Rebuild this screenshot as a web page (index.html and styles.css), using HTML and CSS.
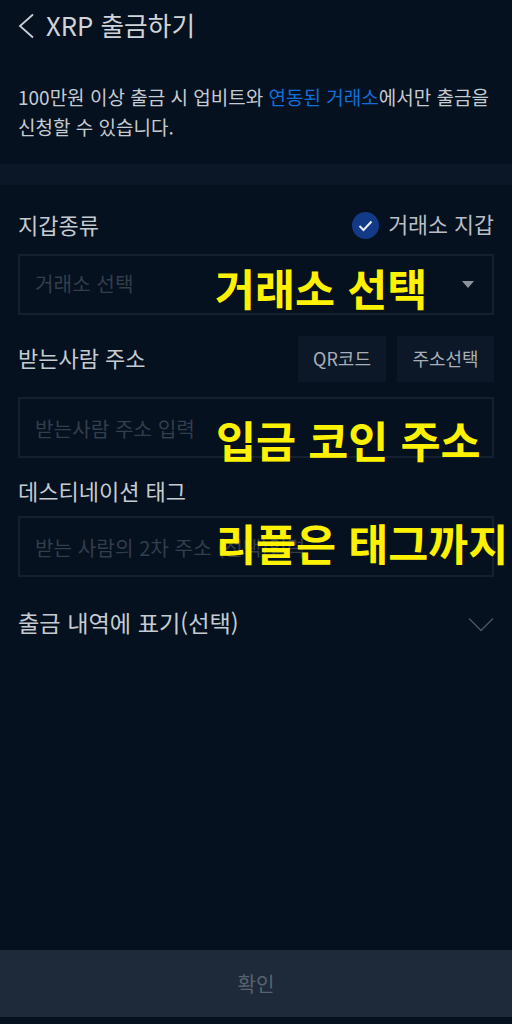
FILE: index.html
```html
<!DOCTYPE html>
<html lang="ko">
<head>
<meta charset="utf-8">
<title>XRP 출금하기</title>
<link rel="stylesheet" href="styles.css">
</head>
<body>
<div class="page">
  <header class="header">
    <svg class="back" width="18" height="26" viewBox="0 0 18 26"><path d="M16 1.500 3 13l13 11.500" fill="none" stroke="#c9ced6" stroke-width="1.800"/></svg>
    <h1 class="title">XRP 출금하기</h1>
  </header>
  <p class="notice">100만원 이상 출금 시 업비트와 <span class="link">연동된 거래소</span>에서만 출금을<br>신청할 수 있습니다.</p>
  <div class="band"></div>
  <main class="form">
    <div class="row wallet-row">
      <span class="label">지갑종류</span>
      <span class="check">
        <svg width="27" height="27" viewBox="0 0 27 27"><circle cx="13.500" cy="13.500" r="13.500" fill="#123a86"/><path d="M7.500 14l4 4 8-8.500" fill="none" stroke="#e8edf5" stroke-width="2"/></svg>
        <span class="check-text">거래소 지갑</span>
      </span>
    </div>
    <div class="field select"><span class="placeholder">거래소 선택</span><i class="caret"></i></div>
    <div class="row addr-row">
      <span class="label">받는사람 주소</span>
      <span class="btns"><span class="btn qr">QR코드</span><span class="btn pick">주소선택</span></span>
    </div>
    <div class="field"><span class="placeholder">받는사람 주소 입력</span></div>
    <div class="label tag-label">데스티네이션 태그</div>
    <div class="field"><span class="placeholder">받는 사람의 2차 주소 (선택)입력</span></div>
    <div class="row memo-row">
      <span class="label memo">출금 내역에 표기(선택)</span>
      <svg width="26" height="15" viewBox="0 0 26 15"><path d="M1 1.500 13 13.500 25 1.500" fill="none" stroke="#4a5563" stroke-width="1.500"/></svg>
    </div>
  </main>
  <div class="confirm">확인</div>
  <div class="note n1">거래소 선택</div>
  <div class="note n2">입금 코인 주소</div>
  <div class="note n3">리플은 태그까지</div>
</div>
</body>
</html>
```
FILE: styles.css
```css
* { box-sizing: border-box; }
html, body { margin: 0; padding: 0; }
body { background: #05111f; font-family: "Noto Sans CJK KR", "Noto Sans", sans-serif; color: #c4c9d0; }
.page { position: relative; width: 512px; height: 1024px; overflow: hidden; }
.header { display: flex; align-items: center; height: 52px; padding-left: 17px; }
.back { flex: none; }
.title { margin: 0 0 0 11px; padding-bottom: 2px; font-size: 25.700px; font-weight: 400; line-height: 50px; color: #d0d4da; }
.notice { margin: 30px 18px 0; font-size: 19px; line-height: 30px; color: #c6cbd2; white-space: nowrap; height: 82px; }
.link { color: #0f6fdc; }
.band { height: 21px; background: #0b1626; }
.form { padding: 0 18px; }
.row { display: flex; justify-content: space-between; align-items: center; }
.label { padding-bottom: 4px; font-size: 22px; line-height: 26px; color: #c6cbd2; }
.wallet-row { margin-top: 27px; height: 27px; }
.check { display: flex; align-items: center; gap: 9px; }
.check-text { padding-bottom: 4px; font-size: 21.700px; line-height: 26px; color: #b9bec6; }
.field { display: flex; align-items: center; justify-content: space-between; height: 61px; margin-top: 15px; padding: 2px 18px 0 15px; border: 2px solid #141f30; }
.select { margin-top: 15px; padding: 0 18px 2px 15px; }
.placeholder { font-size: 20.200px; color: #333d4b; white-space: nowrap; }
.caret { width: 0; height: 0; border-left: 6.500px solid transparent; border-right: 6.500px solid transparent; border-top: 7px solid #8b929c; margin-top: 2px; }
.addr-row { margin-top: 21px; height: 46px; }
.btns { display: flex; gap: 11px; }
.btn { display: flex; align-items: center; justify-content: center; height: 46px; padding-bottom: 3px; background: #0c1727; font-size: 18px; color: #a9afb8; }
.qr { width: 88px; }
.pick { width: 97px; }
.addr-row + .field { margin-top: 15px; }
.tag-label { margin-top: 19px; padding-bottom: 0; height: 28px; }
.tag-label + .field { margin-top: 11px; height: 61px; }
.memo-row { margin-top: 33px; height: 28px; }
.memo { font-size: 23.200px; line-height: 28px; }
.confirm { position: absolute; left: 0; right: 0; top: 950px; height: 67px; display: flex; align-items: center; justify-content: center; background: #1e2a3a; font-size: 20px; color: #59626f; }
.note { position: absolute; font-weight: 700; color: #fff200; white-space: nowrap; font-size: 43.500px; line-height: 50px; }
.n1 { left: 215px; top: 263px; }
.n2 { left: 216px; top: 415px; }
.n3 { left: 216px; top: 518px; }
```
